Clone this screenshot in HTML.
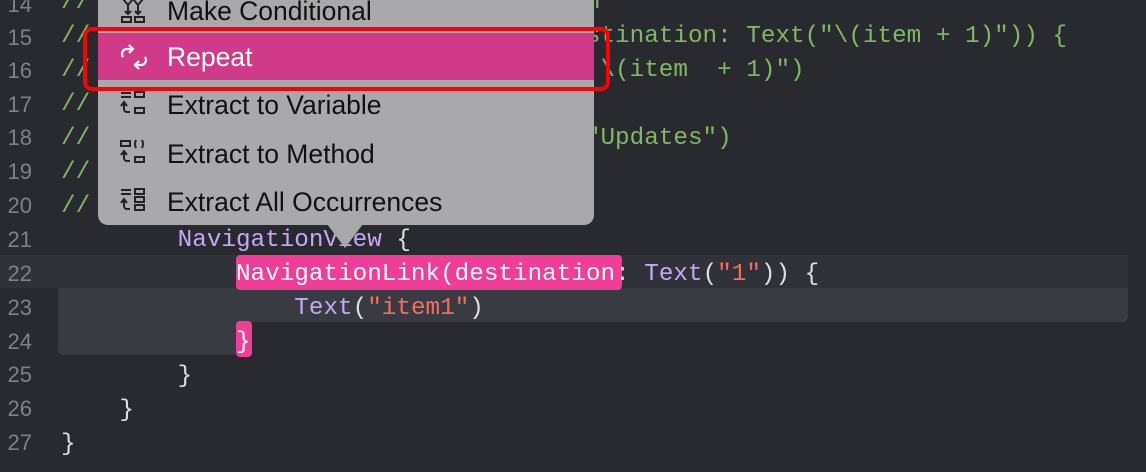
<!DOCTYPE html>
<html><head><meta charset="utf-8"><style>
body{margin:0;width:1146px;height:472px;background:#292a30;overflow:hidden;position:relative;font-family:"Liberation Mono",monospace}
.ln{position:absolute;left:0;width:32px;text-align:right;color:#7f8088;font-size:22px;font-family:"Liberation Sans",sans-serif;}
.code{position:absolute;left:61px;font-size:24.3px;color:#dfdfe0;white-space:pre;line-height:34px}
.c{color:#7fb862}.k{color:#c7a6f6}.s{color:#fc6a5d}.w{color:#fff}
.menu{position:absolute;left:98px;top:-20px;width:496px;height:245px;background:#a9a9ab;border-radius:10px;font-family:"Liberation Sans",sans-serif;font-size:26.5px;color:#111}
.it{position:absolute;left:69px}
.ic{position:absolute;left:22px}
</style></head><body>
<div style="position:absolute;left:0;top:255px;width:1128px;height:33px;background:#2f3239"></div>
<div style="position:absolute;left:58px;top:288px;width:1070px;height:34px;background:#393b42;border-radius:0 0 6px 6px"></div>
<div style="position:absolute;left:58px;top:288px;width:180px;height:67px;background:#393b42;border-radius:6px"></div>
<div style="position:absolute;left:236px;top:255px;width:386px;height:35px;background:#f03e98;border-radius:4px"></div>
<div style="position:absolute;left:236px;top:321px;width:16px;height:36px;background:#f03e98;border-radius:4px"></div>
<div class="ln" style="top:-8px">14</div><div class="ln" style="top:25px">15</div><div class="ln" style="top:58px">16</div><div class="ln" style="top:92px">17</div><div class="ln" style="top:125px">18</div><div class="ln" style="top:159px">19</div><div class="ln" style="top:193px">20</div><div class="ln" style="top:227px">21</div><div class="ln" style="top:261px">22</div><div class="ln" style="top:295px">23</div><div class="ln" style="top:329px">24</div><div class="ln" style="top:362px">25</div><div class="ln" style="top:396px">26</div><div class="ln" style="top:430px">27</div>
<div class="code" style="top:-14px"><span class="c">//                                  n</span>
<span class="c">//                 NavigationLink(destination: Text("\(item + 1)")) {</span>
<span class="c">//                        Text("Item \(item  + 1)")</span>
<span class="c">//                 }</span>
<span class="c">//              .navigationBarTitle("Updates")</span>
<span class="c">//         }</span>
<span class="c">//     }</span>
        <span class="k">NavigationView</span> {
            <span class="w">NavigationLink(destination</span>: <span class="k">Text</span>(<span class="s">"1"</span>)) {
                <span class="k">Text</span>(<span class="s">"item1"</span>)
            <span class="w">}</span>
        }
    }
}</div>
<div style="position:absolute;left:327px;top:224px;width:0;height:0;border-left:18px solid transparent;border-right:18px solid transparent;border-top:24px solid #a9a9ab"></div>
<div class="menu">
<div style="position:absolute;left:0;top:53px;width:496px;height:47px;background:#d03a88"></div>
<svg class="ic" style="top:17px" width="26" height="30" viewBox="0 0 26 30" fill="none" stroke="#222" stroke-width="2"><path d="M3 2l5 6 5-6M13 2l5 6 5-6M8 8v9M18 8v9M5 14l3 3 3-3M15 14l3 3 3-3"/><rect x="2" y="20" width="9" height="5"/><rect x="15" y="20" width="9" height="5"/></svg>
<div class="it" style="top:16px">Make Conditional</div>
<svg class="ic" style="top:64px" width="28" height="26" viewBox="0 0 28 26" fill="none" stroke="#fff" stroke-width="2.2"><path d="M12 5H7a5 5 0 0 0-4 8M9 1l4 4-4 4M16 21h5a5 5 0 0 0 4-8M19 17l-4 4 4 4"/></svg>
<div class="it" style="top:62px;color:#fff">Repeat</div>
<svg class="ic" style="top:110px" width="26" height="26" viewBox="0 0 26 26" fill="none" stroke="#222" stroke-width="2"><path d="M1 3h10M1 7h10M10 22H7a3 3 0 0 1-3-3v-6M1 16l3-4 3 4"/><rect x="15" y="2" width="9" height="5"/><rect x="15" y="18" width="9" height="5"/></svg>
<div class="it" style="top:110px">Extract to Variable</div>
<svg class="ic" style="top:159px" width="26" height="26" viewBox="0 0 26 26" fill="none" stroke="#222" stroke-width="2"><rect x="1" y="2" width="9" height="5"/><path d="M16 1q-2 4 0 8M22 1q2 4 0 8M10 22H7a3 3 0 0 1-3-3v-6M1 16l3-4 3 4"/><rect x="15" y="18" width="9" height="5"/></svg>
<div class="it" style="top:159px">Extract to Method</div>
<svg class="ic" style="top:207px" width="26" height="26" viewBox="0 0 26 26" fill="none" stroke="#222" stroke-width="2"><path d="M1 3h10M1 7h10M10 22H7a3 3 0 0 1-3-3v-6M1 16l3-4 3 4"/><rect x="15" y="2" width="9" height="5"/><rect x="15" y="10" width="9" height="5"/><rect x="15" y="18" width="9" height="5"/></svg>
<div class="it" style="top:207px">Extract All Occurrences</div>
</div>
<div style="position:absolute;left:83px;top:27px;width:519px;height:56px;border:4px solid #f00;border-radius:9px"></div>
</body></html>
